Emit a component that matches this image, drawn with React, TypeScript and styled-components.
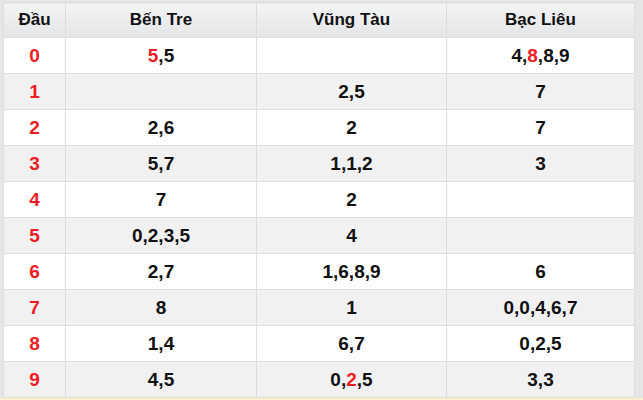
import React from "react";
import styled, { createGlobalStyle } from "styled-components";

const Global = createGlobalStyle`
  html, body { margin: 0; padding: 0; background: #e8e8e8; }
  body { font-family: "Liberation Sans", Arial, Helvetica, sans-serif; }
`;

const Page = styled.div`
  width: 643px;
  height: 400px;
  overflow: hidden;
  background: #e6e6e6;
  padding: 2px 7px 0 3px;
  box-sizing: border-box;
`;

const Table = styled.table`
  width: 632px;
  border-collapse: collapse;
  table-layout: fixed;
  background: #fff;
  border: 1px solid #e0ddd6;
`;

const HeadCell = styled.th<{ $w: number }>`
  width: ${(p) => p.$w}px;
  height: 34px;
  padding: 0;
  font-family: "Liberation Sans", Arial, sans-serif;
  font-size: 17px;
  font-weight: bold;
  color: #111;
  text-align: center;
  border: 1px solid #e0ddd6;
  background: linear-gradient(#f4f4f4, #e3e5e7);
`;

const Row = styled.tr<{ $alt: boolean }>`
  background: ${(p) => (p.$alt ? "#f1f1f1" : "#ffffff")};
`;

const Cell = styled.td<{ $red?: boolean }>`
  height: 35px;
  padding: 0;
  font-family: "Liberation Sans", Arial, sans-serif;
  font-size: 19px;
  font-weight: bold;
  text-align: center;
  color: ${(p) => (p.$red ? "#ee1c25" : "#111")};
  border: 1px solid #e0ddd6;
`;

const Hot = styled.span`
  color: #ee1c25;
`;

const Footer = styled.div`
  height: 4px;
  background: #fcf1cf;
  margin-left: -3px;
  margin-right: -7px;
`;

type Part = string | { hot: string };

const rows: Part[][][] = [
  [[{ hot: "5" }, ",5"], [], ["4,", { hot: "8" }, ",8,9"]],
  [[], ["2,5"], ["7"]],
  [["2,6"], ["2"], ["7"]],
  [["5,7"], ["1,1,2"], ["3"]],
  [["7"], ["2"], []],
  [["0,2,3,5"], ["4"], []],
  [["2,7"], ["1,6,8,9"], ["6"]],
  [["8"], ["1"], ["0,0,4,6,7"]],
  [["1,4"], ["6,7"], ["0,2,5"]],
  [["4,5"], ["0,", { hot: "2" }, ",5"], ["3,3"]],
];

const heads: [string, number][] = [
  ["Đầu", 62],
  ["Bến Tre", 191],
  ["Vũng Tàu", 190],
  ["Bạc Liêu", 188],
];

export default function App() {
  return (
    <>
      <Global />
      <Page>
        <Table>
          <colgroup>
            {heads.map(([h, w]) => (
              <col key={h} style={{ width: w }} />
            ))}
          </colgroup>
          <thead>
            <tr>
              {heads.map(([h, w]) => (
                <HeadCell key={h} $w={w}>
                  {h}
                </HeadCell>
              ))}
            </tr>
          </thead>
          <tbody>
            {rows.map((r, i) => (
              <Row key={i} $alt={i % 2 === 1}>
                <Cell $red>{i}</Cell>
                {r.map((parts, j) => (
                  <Cell key={j}>
                    {parts.map((p, k) =>
                      typeof p === "string" ? (
                        <React.Fragment key={k}>{p}</React.Fragment>
                      ) : (
                        <Hot key={k}>{p.hot}</Hot>
                      )
                    )}
                  </Cell>
                ))}
              </Row>
            ))}
          </tbody>
        </Table>
        <Footer />
      </Page>
    </>
  );
}
